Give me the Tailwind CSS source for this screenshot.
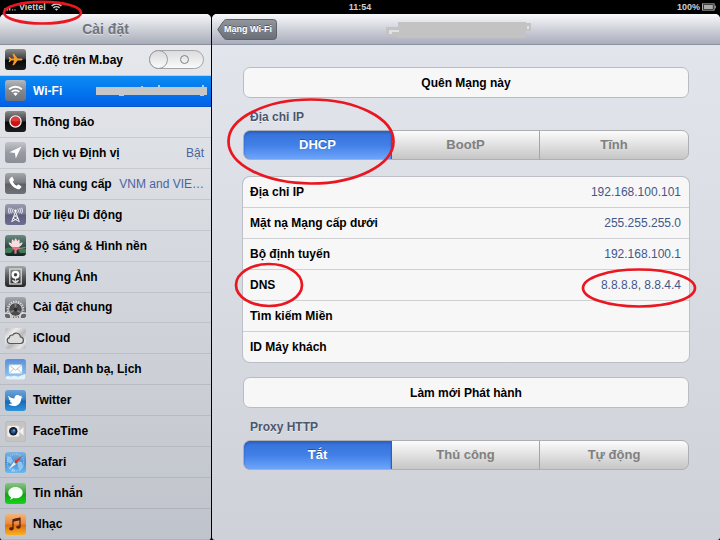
<!DOCTYPE html>
<html lang="vi">
<head>
  <meta charset="UTF-8" />
  <meta name="viewport" content="width=device-width,initial-scale=1.0" />
  <title>Cài đặt</title>
  <!-- TailwindCSS -->
  <script src="https://cdn.jsdelivr.net/npm/@tailwindcss/browser@4"></script>
</head>
<body class="flex h-screen flex-col overflow-hidden bg-black font-['Liberation_Sans',Arial,sans-serif] text-xs text-black">

  <!-- Status bar -->
  <div class="grid h-[14px] shrink-0 grid-cols-3 items-center px-1 text-[9px] font-bold leading-none text-[#cfcfcf]">
    <div class="relative flex items-center">
      <svg class="mr-[3px] h-[8px] w-[12px]" viewBox="0 0 12 8" fill="#bbb" aria-hidden="true">
        <rect x="0" y="5.5" width="1.6" height="2" /><rect x="2.4" y="4.5" width="1.6" height="3" />
        <rect x="4.8" y="3.5" width="1.6" height="4" /><rect x="8" y="6.3" width="1.2" height="1.2" /><rect x="10.4" y="6.3" width="1.2" height="1.2" />
      </svg>
      <span>Viettel</span>
      <svg class="ml-[5px] h-[8px] w-[11px]" viewBox="0 0 11 8" fill="none" stroke="#cfcfcf" stroke-width="1.5" aria-hidden="true">
        <path d="M.6 3a7 7 0 0 1 9.8 0M2.4 5a4.4 4.4 0 0 1 6.2 0" /><path d="M5.5 7.8 3.9 6.2a2.3 2.3 0 0 1 3.2 0z" fill="#cfcfcf" stroke="none" />
      </svg>
      <svg class="absolute -left-1 -top-[3px] z-20 h-[26px] w-[86px]" viewBox="0 0 86 26" fill="none" stroke="#ea1620" stroke-width="2.7" aria-hidden="true">
        <ellipse cx="42.5" cy="12.7" rx="38.5" ry="10.8" />
      </svg>
    </div>
    <div class="text-center">11:54</div>
    <div class="flex items-center justify-end gap-[2px]">
      <span>100%</span>
      <svg class="h-[8px] w-[14px]" viewBox="0 0 14 8" fill="none" aria-hidden="true">
        <rect x=".5" y=".9" width="11.6" height="6.2" stroke="#aaa" /><rect x="1.7" y="2" width="9.2" height="4" fill="#aaa" /><rect x="12.6" y="2.6" width="1.2" height="2.8" fill="#aaa" />
      </svg>
    </div>
  </div>

  <div class="flex min-h-0 flex-1 gap-px">
    <!-- Sidebar -->
    <aside class="flex w-[211px] shrink-0 flex-col overflow-hidden rounded-t-[5px] rounded-b-[3px] bg-linear-to-b from-[#e8eaee] to-[#bfc3cb]">
      <header class="flex h-[31px] shrink-0 items-center justify-center border-b border-[#8b909b] bg-linear-to-b from-[#f6f7f9] to-[#a9adb9]">
        <h1 class="text-sm font-bold text-[#70757f] [text-shadow:0_1px_0_#ffffff80]">Cài đặt</h1>
      </header>

      <ul class="grid flex-1 auto-rows-fr font-bold">
        <li class="flex items-center border-b border-[#c8cad0] pl-[5px] pr-[7px]">
          <svg class="size-[21px] shrink-0" viewBox="0 0 21 21" aria-hidden="true">
            <defs><linearGradient id="dark" x2="0" y2="1"><stop stop-color="#8b8b8b" /><stop offset=".48" stop-color="#3c3c3c" /><stop offset=".52" stop-color="#080808" /><stop offset="1" stop-color="#1d1d1d" /></linearGradient></defs>
            <rect width="21" height="21" rx="3" fill="url(#dark)" />
            <path fill="#f99a22" d="M17.5 10.5c0-.7-.9-1-1.8-1h-3L9 4.8H7.4l1.7 4.7H6.2L4.8 7.900H3.6l.8 2.6-.8 2.6h1.2l1.4-1.6h2.9l-1.7 4.7H9l3.7-4.7h3c.9 0 1.800-.3 1.800-1z" />
          </svg>
          <label for="airplane" class="ml-[7px] flex-1">C.độ trên M.bay</label>
          <input id="airplane" type="checkbox" role="switch"
                 class="relative h-[19px] w-[55px] appearance-none rounded-full border border-[#a3a5a9] bg-linear-to-b from-[#dcdcdf] to-[#fafafa] before:absolute before:-left-px before:-top-px before:size-[19px] before:rounded-full before:border before:border-[#999ba0] before:bg-linear-to-b before:from-[#d9d9db] before:to-[#fbfbfb] after:absolute after:left-[30px] after:top-[4px] after:size-[9px] after:rounded-full after:border after:border-[#808184]" />
        </li>
        <li>
          <a href="#" aria-current="page" class="flex h-full items-center border-b border-[#0455d2] bg-linear-to-b from-[#0d8bf3] to-[#0560e8] pl-[5px] pr-1 text-white">
            <svg class="size-[21px] shrink-0" viewBox="0 0 21 21" aria-hidden="true">
              <defs><linearGradient id="gray" x2="0" y2="1"><stop stop-color="#b5b8bd" /><stop offset=".5" stop-color="#85888e" /><stop offset="1" stop-color="#70737a" /></linearGradient></defs>
              <rect width="21" height="21" rx="3" fill="url(#gray)" />
              <path d="M4.2 9.3a9 9 0 0 1 12.6 0M6.7 11.9a5.4 5.4 0 0 1 7.6 0" fill="none" stroke="#fff" stroke-width="1.9" />
              <path d="m10.5 16-2.2-2.4a3.1 3.1 0 0 1 4.4 0z" fill="#fff" />
            </svg>
            <span class="ml-[7px] flex-1">Wi-Fi</span>
            <!-- hidden network name -->
            <svg class="h-[11px] w-[111px]" viewBox="0 0 111 11" aria-hidden="true">
              <path fill="#c5c6c8" d="M0 2h45V1h2v1h15V0h2v2h42V0h2v2h3v8h-3v1h-4v-1H28v1h-5v-1H0z" />
            </svg>
          </a>
        </li>
        <li>
          <a href="#" class="flex h-full items-center border-b border-[#c8cad0] pl-[5px] pr-[7px]">
            <svg class="size-[21px] shrink-0" viewBox="0 0 21 21" aria-hidden="true">
              <rect width="21" height="21" rx="3" fill="url(#dark)" />
              <circle cx="10.5" cy="10.5" r="5.6" fill="#d01216" stroke="#f2f2f2" stroke-width="1.3" />
              <path d="M6 9.4a4.6 4.6 0 0 1 9 0c-3 1.3-6 1.3-9 0z" fill="#e03c3e" />
            </svg>
            <span class="ml-[7px]">Thông báo</span>
          </a>
        </li>
        <li>
          <a href="#" class="flex h-full items-center border-b border-[#c8cad0] pl-[5px] pr-[7px]">
            <svg class="size-[21px] shrink-0" viewBox="0 0 21 21" aria-hidden="true">
              <defs><linearGradient id="silver" x2="0" y2="1"><stop stop-color="#c4c5cb" /><stop offset=".5" stop-color="#999ba4" /><stop offset="1" stop-color="#8b8d98" /></linearGradient></defs>
              <rect width="21" height="21" rx="3" fill="url(#silver)" />
              <path d="M16.3 4.6 4.4 10.2l5.5.8.9 5.6z" fill="#fff" />
            </svg>
            <span class="ml-[7px] flex-1">Dịch vụ Định vị</span>
            <span class="font-normal text-[#4a64a0]">Bật</span>
          </a>
        </li>
        <li>
          <a href="#" class="flex h-full items-center border-b border-[#c4c6cc] pl-[5px] pr-[7px]">
            <svg class="size-[21px] shrink-0" viewBox="0 0 21 21" aria-hidden="true">
              <defs><linearGradient id="slate" x2="0" y2="1"><stop stop-color="#a4a7ab" /><stop offset=".48" stop-color="#777a7f" /><stop offset=".52" stop-color="#5d6065" /><stop offset="1" stop-color="#6e7176" /></linearGradient></defs>
              <rect width="21" height="21" rx="3" fill="url(#slate)" />
              <path fill="#fff" d="M4.9 5.4 6.6 4c.4-.3.8-.2 1 .2l1.3 2.5c.2.4.1.8-.2 1l-1 .9c.8 1.8 2.2 3.3 4 4.2l1-1.1c.3-.3.7-.4 1-.1l2.5 1.6c.4.3.4.7.1 1l-1.3 1.5c-.6.7-1.8.8-2.9.4-3.5-1.2-6.5-4.3-7.7-7.8-.3-1.1-.2-2.3.5-2.9z" />
            </svg>
            <span class="ml-[7px] shrink-0">Nhà cung cấp</span>
            <span class="ml-auto font-normal whitespace-nowrap text-[#4a64a0]">VNM and VIE…</span>
          </a>
        </li>
        <li>
          <a href="#" class="flex h-full items-center border-b border-[#c4c6cc] pl-[5px] pr-[7px]">
            <svg class="size-[21px] shrink-0" viewBox="0 0 21 21" aria-hidden="true">
              <defs><linearGradient id="indigo" x2="0" y2="1"><stop stop-color="#9a9db1" /><stop offset=".48" stop-color="#74778f" /><stop offset=".52" stop-color="#5a5d7d" /><stop offset="1" stop-color="#6c6f90" /></linearGradient></defs>
              <rect width="21" height="21" rx="3" fill="url(#indigo)" />
              <g fill="none" stroke="#fff" stroke-width=".9">
                <path d="M10.5 7.5 6.6 18M10.5 7.5l3.900 10.5M9.300 11l3.800 3.200M11.700 11l-3.800 3.200M7.900 14.200l6 3.200M13.100 14.200l-6 3.200" />
                <path d="M8.300 8.600a2.800 2.800 0 0 1 0-3.800M12.700 8.600a2.800 2.800 0 0 0 0-3.800M6.300 9.300a4.700 4.700 0 0 1 0-5.200M14.700 9.300a4.700 4.700 0 0 0 0-5.200M4.300 9.700a6.500 6.500 0 0 1 0-6M16.700 9.700a6.500 6.500 0 0 0 0-6" />
              </g>
              <circle cx="10.5" cy="6.7" r="1.2" fill="#fff" />
            </svg>
            <span class="ml-[7px]">Dữ liệu Di động</span>
          </a>
        </li>
        <li>
          <a href="#" class="flex h-full items-center border-b border-[#c4c6cc] pl-[5px] pr-[7px]">
            <svg class="size-[21px] shrink-0" viewBox="0 0 21 21" aria-hidden="true">
              <defs><linearGradient id="pond" x2="0" y2="1"><stop stop-color="#6f8b83" /><stop offset=".45" stop-color="#33584d" /><stop offset="1" stop-color="#12241d" /></linearGradient></defs>
              <rect width="21" height="21" rx="3" fill="url(#pond)" />
              <path d="M0 14c4-3 7-1 9 0l-3 4H0zM13 15c3-2 6-2 8-1v4h-6z" fill="#3f7b58" />
              <path d="M10.5 12.500C6.500 13 4.500 10.500 3.500 7.500c1.500 0 2.500.4 3.200 1.200C6.500 7 6.700 5.300 7.200 4.200c1 .6 1.600 1.200 2 2 .3-1.300.8-2.200 1.400-3 .9.8 1.400 1.800 1.700 3 .4-.8 1-1.400 1.800-2 .7 1.300.9 2.900.3 4.500 1-.8 2-1.200 3.400-1.200-1 3-3.300 5.500-7.300 5z" fill="#f8dce0" />
              <path d="M6.500 11.500c2.500 1.300 6 1.300 8.500 0-.5 2-2 3-3.300 3.200l-.2 4h-2l-.2-4c-1.400-.3-2.400-1.300-2.800-3.200z" fill="#ea6f88" />
              <path d="M11 13.500 20.500 12v.8L11 14.700z" fill="#d8838f" />
            </svg>
            <span class="ml-[7px]">Độ sáng &amp; Hình nền</span>
          </a>
        </li>
        <li>
          <a href="#" class="flex h-full items-center border-b border-[#c0c2c9] pl-[5px] pr-[7px]">
            <svg class="size-[21px] shrink-0" viewBox="0 0 21 21" aria-hidden="true">
              <defs><linearGradient id="frame" x2="0" y2="1"><stop stop-color="#a5a6a7" /><stop offset=".5" stop-color="#565758" /><stop offset="1" stop-color="#242526" /></linearGradient></defs>
              <rect width="21" height="21" rx="3" fill="url(#frame)" />
              <rect x="4.8" y="3" width="11.4" height="15" fill="none" stroke="#e3e3e3" stroke-width="1.2" />
              <path d="M10.5 11v6M10.5 16.5c-1.500 0-2.600-.7-3-2 1.500 0 2.600.7 3 2zM10.500 16.500c1.500 0 2.600-.7 3-2-1.500 0-2.600.7-3 2z" fill="#eee" stroke="#eee" stroke-width=".8" />
              <circle cx="10.5" cy="8.7" r="2.9" fill="none" stroke="#fff" stroke-width="2.2" />
              <circle cx="10.5" cy="8.7" r="1.2" fill="#3c3c3c" />
            </svg>
            <span class="ml-[7px]">Khung Ảnh</span>
          </a>
        </li>
        <li>
          <a href="#" class="flex h-full items-center border-b border-[#c0c2c9] pl-[5px] pr-[7px]">
            <svg class="size-[21px] shrink-0" viewBox="0 0 21 21" aria-hidden="true">
              <defs><clipPath id="tile"><rect width="21" height="21" rx="3" /></clipPath></defs>
              <g clip-path="url(#tile)">
                <rect width="21" height="21" fill="url(#slate)" />
                <circle cx="10.5" cy="12.5" r="8" fill="none" stroke="#ddd" stroke-width="1.800" stroke-dasharray="1.300 1.200" />
                <circle cx="10.5" cy="12.5" r="6.8" fill="#4a4b4d" stroke="#d4d4d4" stroke-width="1" />
                <path d="M10.500 12.500V6M10.500 12.500l5.600 3.200M10.500 12.500l-5.600 3.200" stroke="#7e8083" stroke-width="1.800" />
                <circle cx="10.5" cy="12.5" r="2" fill="#2c2d2e" />
                <circle cx="2" cy="20" r="4" fill="#666" stroke="#ddd" stroke-width="1.600" /><circle cx="19" cy="20" r="4" fill="#666" stroke="#ddd" stroke-width="1.600" />
              </g>
            </svg>
            <span class="ml-[7px]">Cài đặt chung</span>
          </a>
        </li>
        <li>
          <a href="#" class="flex h-full items-center border-b border-[#bcbec5] pl-[5px] pr-[7px]">
            <svg class="size-[21px] shrink-0" viewBox="0 0 21 21" aria-hidden="true">
              <defs><linearGradient id="metal" x2="1" y2="1"><stop stop-color="#b5b5b5" /><stop offset=".3" stop-color="#ededed" /><stop offset=".55" stop-color="#b9b9b9" /><stop offset=".8" stop-color="#e6e6e6" /><stop offset="1" stop-color="#b0b0b0" /></linearGradient></defs>
              <rect width="21" height="21" rx="3" fill="url(#metal)" />
              <path d="M5 15.5a3 3 0 0 1-.6-5.900 2.600 2.600 0 0 1 3.200-2.500 4.300 4.300 0 0 1 7.900 1.800 3.400 3.400 0 0 1 .6 6.600z" fill="#dcdcdc" stroke="#55575a" stroke-width="1.200" />
            </svg>
            <span class="ml-[7px]">iCloud</span>
          </a>
        </li>
        <li>
          <a href="#" class="flex h-full items-center border-b border-[#b8bbc2] pl-[5px] pr-[7px]">
            <svg class="size-[21px] shrink-0" viewBox="0 0 21 21" aria-hidden="true">
              <defs><linearGradient id="mail" x2="0" y2="1"><stop stop-color="#5b8fda" /><stop offset=".65" stop-color="#7db9f0" /><stop offset="1" stop-color="#a9d6f8" /></linearGradient></defs>
              <rect width="21" height="21" rx="3" fill="url(#mail)" />
              <path d="M.5 18c2-1.500 4-1 5.500-.3 2-1.200 5-1 7 0 2.500-.8 5-2 7.500-3v3.300a2.500 2.500 0 0 1-2.500 2.500H3A2.500 2.500 0 0 1 .5 18z" fill="#e4f2fd" />
              <rect x="4" y="5.800" width="13" height="8.800" rx=".6" fill="#fdfdfd" stroke="#c9cdd4" stroke-width=".5" />
              <path d="m4.300 6.200 6.200 5 6.200-5M4.300 14.300l4.300-4.400M16.700 14.300l-4.300-4.400" fill="none" stroke="#a4aab5" stroke-width=".7" />
            </svg>
            <span class="ml-[7px]">Mail, Danh bạ, Lịch</span>
          </a>
        </li>
        <li>
          <a href="#" class="flex h-full items-center border-b border-[#b8bbc2] pl-[5px] pr-[7px]">
            <svg class="size-[21px] shrink-0" viewBox="0 0 21 21" aria-hidden="true">
              <defs><linearGradient id="bird" x2="0" y2="1"><stop stop-color="#6fa3d8" /><stop offset=".48" stop-color="#357fc4" /><stop offset=".52" stop-color="#1669b4" /><stop offset="1" stop-color="#2f93dc" /></linearGradient></defs>
              <rect width="21" height="21" rx="3" fill="url(#bird)" />
              <path fill="#fff" d="M3.200 5.800c1.600 1.700 3.700 2.500 6.300 2.700-.2-1.800.9-3.500 2.800-3.600 1.200-.1 2 .4 2.700 1.200l2-.3-1 1.500 1.700.2-1.600 1.300c.1 4.100-3 7.300-7.100 7.300-2.300 0-4.200-.8-5.500-2 1.700.1 3-.2 4-1-1.400-.2-2.300-1-2.700-2.100h1.200c-1.500-.7-2.200-1.700-2.300-3l1.200.3C3.600 7.600 2.900 6.900 3.200 5.800z" />
            </svg>
            <span class="ml-[7px]">Twitter</span>
          </a>
        </li>
        <li>
          <a href="#" class="flex h-full items-center border-b border-[#b6b9c0] pl-[5px] pr-[7px]">
            <svg class="size-[21px] shrink-0" viewBox="0 0 21 21" aria-hidden="true">
              <rect x=".3" y=".3" width="20.4" height="20.4" rx="3" fill="#c6c5c3" stroke="#b0b0b0" stroke-width=".6" />
              <rect x="2.300" y="4.800" width="12" height="11" rx="1.800" fill="#efeeec" />
              <path d="m14 10.300 4.500-4.200v8.600z" fill="#f2f2f0" />
              <circle cx="8.300" cy="10.300" r="4.200" fill="#15202e" /><circle cx="8.300" cy="10.300" r="2.400" fill="#24569a" /><circle cx="9" cy="9.500" r=".9" fill="#7fb2e8" />
            </svg>
            <span class="ml-[7px]">FaceTime</span>
          </a>
        </li>
        <li>
          <a href="#" class="flex h-full items-center border-b border-[#b4b7be] pl-[5px] pr-[7px]">
            <svg class="size-[21px] shrink-0" viewBox="0 0 21 21" aria-hidden="true">
              <defs><linearGradient id="sea" x2="0" y2="1"><stop stop-color="#7fb3e4" /><stop offset=".5" stop-color="#468fd4" /><stop offset="1" stop-color="#6db9ee" /></linearGradient></defs>
              <rect width="21" height="21" rx="3" fill="url(#sea)" />
              <path d="M2 4l4 1 2 4-2 3-4-2zM12 9l5 1 1 5-3 4-2-4zM7 16l3 1v3H6z" fill="#8ec4ec" />
              <circle cx="10.5" cy="10.5" r="8.3" fill="none" stroke="#cfe6f8" stroke-width=".8" stroke-dasharray="1 1.200" />
              <path d="m17.500 3.500-8.300 5.700 2.400 2.600z" fill="#d8412f" /><path d="m3.500 17.500 5.700-8.300 2.400 2.600z" fill="#eef0f2" /><circle cx="10.5" cy="10.5" r="1" fill="#555" />
            </svg>
            <span class="ml-[7px]">Safari</span>
          </a>
        </li>
        <li>
          <a href="#" class="flex h-full items-center border-b border-[#b0b3bb] pl-[5px] pr-[7px]">
            <svg class="size-[21px] shrink-0" viewBox="0 0 21 21" aria-hidden="true">
              <defs><linearGradient id="green" x2="0" y2="1"><stop stop-color="#86c683" /><stop offset=".45" stop-color="#3ba63a" /><stop offset=".55" stop-color="#0ea510" /><stop offset="1" stop-color="#16d51a" /></linearGradient></defs>
              <rect width="21" height="21" rx="3" fill="url(#green)" />
              <path fill="#fafffa" d="M10.500 4c4.100 0 7.200 2.500 7.200 5.700s-3.100 5.600-7.200 5.600c-.8 0-1.500-.1-2.200-.2-.8.8-2 1.500-3.300 1.600.6-.7 1-1.500 1-2.400-1.700-1-2.700-2.700-2.700-4.600C3.300 6.500 6.400 4 10.500 4z" />
            </svg>
            <span class="ml-[7px]">Tin nhắn</span>
          </a>
        </li>
        <li>
          <a href="#" class="flex h-full items-center border-b border-[#b0b3bb] pl-[5px] pr-[7px]">
            <svg class="size-[21px] shrink-0" viewBox="0 0 21 21" aria-hidden="true">
              <defs><linearGradient id="orange" x2="0" y2="1"><stop stop-color="#f3b27c" /><stop offset=".48" stop-color="#e88a38" /><stop offset=".52" stop-color="#e06c10" /><stop offset="1" stop-color="#f8b021" /></linearGradient></defs>
              <rect width="21" height="21" rx="3" fill="url(#orange)" />
              <path d="M8 14.500V5.800l7-1.600v8.600" fill="none" stroke="#5a1f10" stroke-width="1.300" /><path d="M8 5.200l7-1.600v2.600L8 7.800z" fill="#5a1f10" />
              <ellipse cx="6.400" cy="14.700" rx="2.200" ry="1.700" fill="#5a1f10" /><ellipse cx="13.400" cy="13.100" rx="2.200" ry="1.700" fill="#5a1f10" />
            </svg>
            <span class="ml-[7px]">Nhạc</span>
          </a>
        </li>
      </ul>
    </aside>

    <!-- Network details -->
    <main class="min-w-0 flex-1 overflow-hidden rounded-t-[5px] rounded-b-[3px] bg-linear-to-b from-[#e3e7ed] to-[#cfd1d8]">
      <header class="grid h-[31px] grid-cols-[1fr_auto_1fr] items-center border-b border-[#8b93a3] bg-linear-to-b from-[#f8f9fb] to-[#a9adbb] px-[5px]">
        <button class="relative flex h-[21px] w-[60px] items-center justify-end pr-[5px] text-[9px] font-bold text-white [text-shadow:0_-1px_0_#00000060]">
          <svg class="absolute inset-0 size-full" viewBox="0 0 60 21" aria-hidden="true">
            <defs><linearGradient id="back" x2="0" y2="1"><stop stop-color="#92969e" /><stop offset="1" stop-color="#686d76" /></linearGradient></defs>
            <path d="M.7 10.500 6.500 2.200Q7.700.5 9.500.5H56.500a3 3 0 0 1 3 3v14a3 3 0 0 1-3 3H9.500q-1.800 0-3-1.700z" fill="url(#back)" stroke="#5d626b" />
          </svg>
          <span class="relative">Mạng Wi-Fi</span>
        </button>
        <!-- hidden network name -->
        <svg class="mr-2 h-[17px] w-[152px]" viewBox="0 0 152 17" aria-hidden="true">
          <path fill="#c3c3c3" d="M12 1h128v1h5v8h-5v7H12v-3H4v1H0V6h12z" /><path fill="#e0e1e4" d="M3 9h10v2H6v2H3zM141 5h2v3h-2z" />
        </svg>
      </header>

      <div class="px-[31px] pt-[22px]">
        <button class="h-[31px] w-full rounded-[7px] border border-[#b9bcc4] bg-[#f7f7f7] font-bold">Quên Mạng này</button>

        <h2 class="mt-[11px] mb-[5px] px-[7px] font-bold leading-4 text-[#4c566c] [text-shadow:0_1px_0_#ffffff90]">Địa chỉ IP</h2>
        <div class="relative">
          <div role="group" aria-label="Địa chỉ IP" class="grid h-[30px] grid-cols-3 overflow-hidden rounded-[7px] border border-[#adafb3] bg-linear-to-b from-[#fcfcfc] to-[#c6c6c6] text-[13px] font-bold text-[#808080]">
            <button aria-pressed="true" class="-my-px -ml-px rounded-l-[7px] border border-[#2d5fb6] bg-linear-to-b from-[#3570d8] via-[#417fe6] to-[#6ea5fb] text-white [text-shadow:0_-1px_0_#00000050] shadow-[inset_0_2px_2px_#2a5fc0]">DHCP</button>
            <button class="border-r border-[#a5a5a5]">BootP</button>
            <button>Tĩnh</button>
          </div>
          <svg class="absolute -left-4 -top-8 z-10 h-[88px] w-[168px]" viewBox="0 0 168 88" fill="none" stroke="#ea1620" stroke-width="2.7" aria-hidden="true">
            <ellipse cx="84" cy="43.5" rx="82.5" ry="42" />
          </svg>
        </div>

        <dl class="mt-[17px] rounded-[7px] bg-[#f7f7f7] ring-1 ring-[#bcbfc6]">
          <div class="flex h-[31px] items-center justify-between border-b border-[#cfd0d3] pl-[7px] pr-2 pb-px">
            <dt class="font-bold">Địa chỉ IP</dt><dd class="text-[#42588a]">192.168.100.101</dd>
          </div>
          <div class="flex h-[31px] items-center justify-between border-b border-[#cfd0d3] pl-[7px] pr-2 pb-px">
            <dt class="font-bold">Mặt nạ Mạng cấp dưới</dt><dd class="text-[#42588a]">255.255.255.0</dd>
          </div>
          <div class="flex h-[31px] items-center justify-between border-b border-[#cfd0d3] pl-[7px] pr-2 pb-px">
            <dt class="font-bold">Bộ định tuyến</dt><dd class="text-[#42588a]">192.168.100.1</dd>
          </div>
          <div class="relative flex h-[31px] items-center justify-between border-b border-[#cfd0d3] pl-[7px] pr-2 pb-px">
            <dt class="font-bold">DNS</dt><dd class="text-[#42588a]">8.8.8.8, 8.8.4.4</dd>
            <svg class="absolute -left-[9px] -top-[8px] z-10 h-[46px] w-[70px]" viewBox="0 0 70 46" fill="none" stroke="#ea1620" stroke-width="2.7" aria-hidden="true">
              <ellipse cx="35" cy="23" rx="33" ry="21" />
            </svg>
            <svg class="absolute -right-2 -top-[2px] z-10 h-[40px] w-[116px]" viewBox="0 0 116 40" fill="none" stroke="#ea1620" stroke-width="2.7" aria-hidden="true">
              <ellipse cx="58" cy="20" rx="56" ry="18.5" />
            </svg>
          </div>
          <div class="flex h-[31px] items-center justify-between border-b border-[#cfd0d3] pl-[7px] pr-2 pb-px">
            <dt class="font-bold">Tìm kiếm Miền</dt><dd></dd>
          </div>
          <div class="flex h-[30px] items-center justify-between pl-[7px] pr-2 pb-px">
            <dt class="font-bold">ID Máy khách</dt><dd></dd>
          </div>
        </dl>

        <button class="mt-[15px] h-[31px] w-full rounded-[7px] border border-[#b9bcc4] bg-[#f7f7f7] font-bold">Làm mới Phát hành</button>

        <h2 class="mt-[11px] mb-[5px] px-[7px] font-bold leading-4 text-[#4c566c] [text-shadow:0_1px_0_#ffffff90]">Proxy HTTP</h2>
        <div role="group" aria-label="Proxy HTTP" class="grid h-[30px] grid-cols-3 overflow-hidden rounded-[7px] border border-[#adafb3] bg-linear-to-b from-[#fcfcfc] to-[#c6c6c6] text-[13px] font-bold text-[#808080]">
          <button aria-pressed="true" class="-my-px -ml-px rounded-l-[7px] border border-[#2d5fb6] bg-linear-to-b from-[#3570d8] via-[#417fe6] to-[#6ea5fb] text-white [text-shadow:0_-1px_0_#00000050] shadow-[inset_0_2px_2px_#2a5fc0]">Tắt</button>
          <button class="border-r border-[#a5a5a5]">Thủ công</button>
          <button>Tự động</button>
        </div>
      </div>
    </main>
  </div>
</body>
</html>
